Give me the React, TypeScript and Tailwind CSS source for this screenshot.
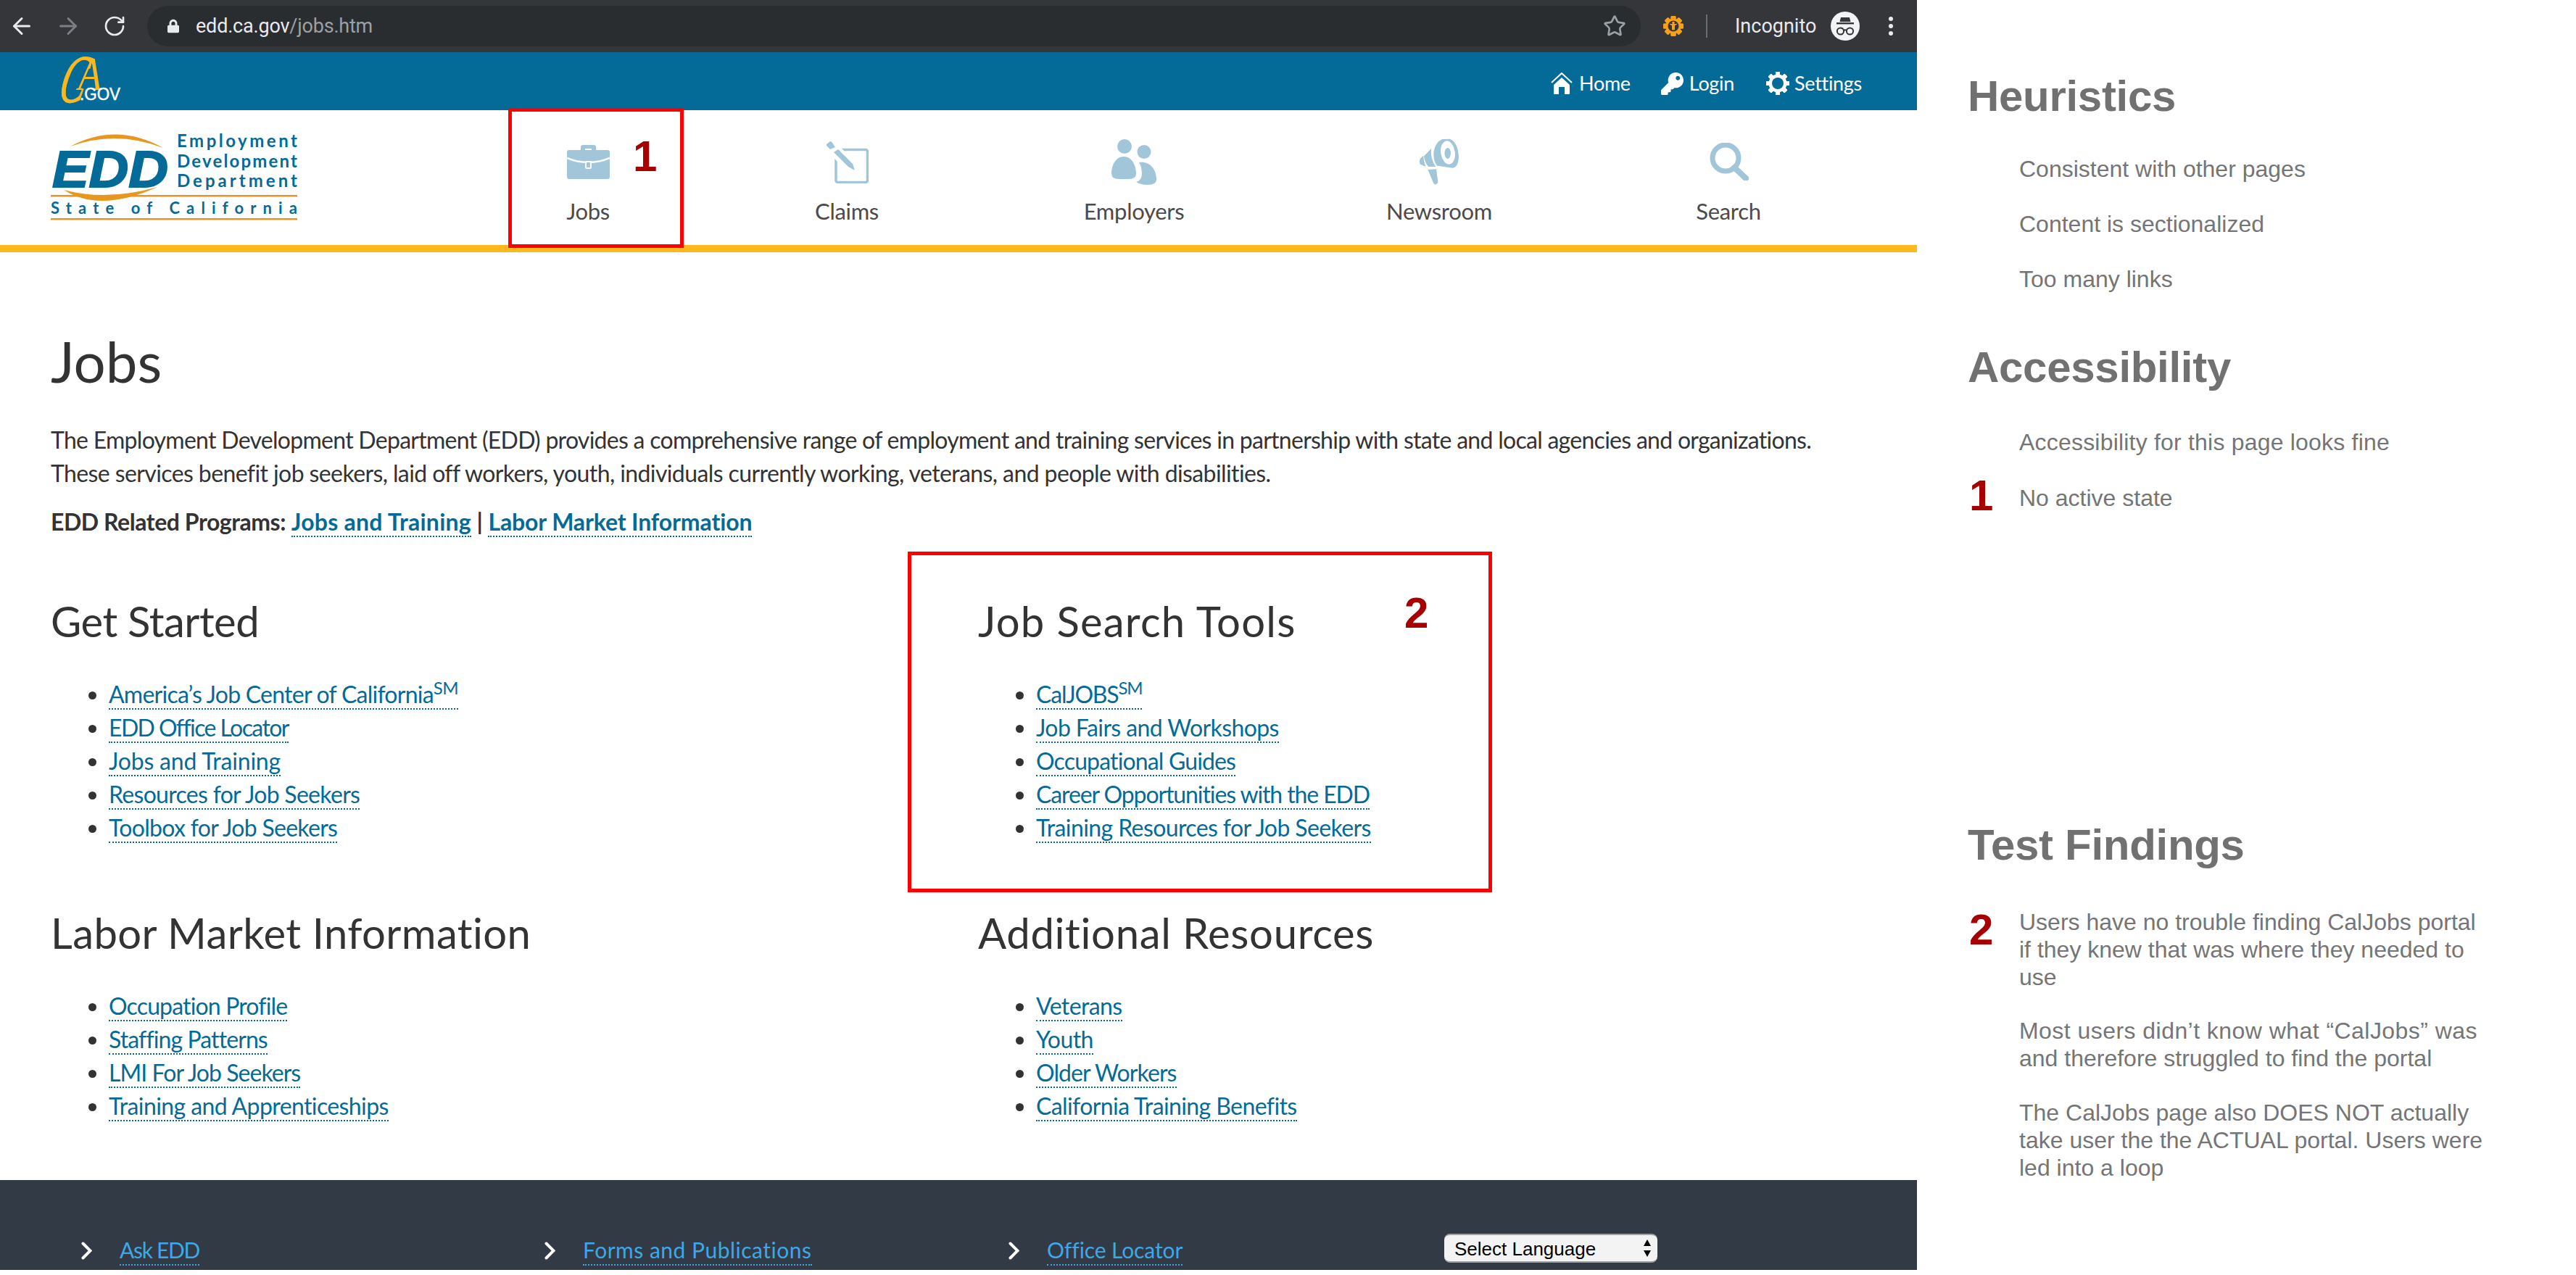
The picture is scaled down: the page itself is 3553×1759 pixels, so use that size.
import { ArrowLeft, ArrowRight, RotateCw, Star } from 'lucide-react'
import { FaKey, FaLock } from 'react-icons/fa'

const blue = '#a1c6d9'

function Briefcase() {
  return (
    <svg width="59" height="48" viewBox="0 0 59 48">
      <path d="M19 9V4a3 3 0 0 1 3-3h15a3 3 0 0 1 3 3v5h-6V6H25v3z" fill={blue} />
      <path d="M3 8h53a3 3 0 0 1 3 3v34a3 3 0 0 1-3 3H3a3 3 0 0 1-3-3V11a3 3 0 0 1 3-3z" fill={blue} />
      <path d="M0 19c18 8 41 8 59 0" fill="none" stroke="#fff" strokeWidth="2.5" />
      <rect x="26" y="24" width="7" height="9" rx="1.5" fill={blue} stroke="#fff" strokeWidth="2" />
    </svg>
  )
}

function ClaimsIcon() {
  return (
    <svg width="59" height="59" viewBox="0 0 59 59">
      <rect x="14" y="12.5" width="43.5" height="45" rx="2.5" fill="none" stroke={blue} strokeWidth="3.5" />
      <path d="M2 2l38 40" stroke="#fff" strokeWidth="17" />
      <path d="M1 5l5-4q2 0 3 2l4 6-7 3-5-5z" fill={blue} />
      <path d="M11 16l6-4 20 20 3 9-9-5z" fill={blue} />
    </svg>
  )
}

function EmployersIcon() {
  return (
    <svg width="62" height="63" viewBox="0 0 62 63">
      <ellipse cx="18" cy="10" rx="10" ry="10" fill={blue} />
      <circle cx="45" cy="17.5" r="9.5" fill={blue} />
      <path d="M38 32c14-2 24 8 24 24q0 7-12 7-10 0-16-4 8-2 8-12 0-8-4-15z" fill={blue} />
      <path d="M17 24c11 0 17 12 17 24q0 7-10 7H10Q0 55 0 47c0-11 6-23 17-23z" fill={blue} />
    </svg>
  )
}

function MegaphoneIcon() {
  return (
    <svg width="56" height="65" viewBox="170 70 170 200">
      <path d="M268 73Q240 85 232 125q-4 35 13 60l65 10q25 0 28-45-3-65-38-78z" fill={blue} />
      <ellipse cx="292" cy="130" rx="30" ry="50" transform="rotate(-8 292 130)" fill="#fff" />
      <ellipse cx="291" cy="133" rx="13" ry="23" fill={blue} />
      <path d="M222 112l-32 33q5 30 20 45l30 0q-25-40-18-78z" fill={blue} />
      <path d="M188 143l-13 12q-7 15 0 25l23 10q-10-25-10-47z" fill={blue} />
      <path d="M207 202l36-2 7 58q-10 12-18 4z" fill={blue} />
    </svg>
  )
}

function SearchIcon() {
  return (
    <svg width="55" height="52" viewBox="0 0 55 52">
      <circle cx="23" cy="21" r="18" fill="none" stroke={blue} strokeWidth="7" />
      <path d="M35 34l16 15" stroke={blue} strokeWidth="8" strokeLinecap="round" />
    </svg>
  )
}

function HomeIcon() {
  return (
    <svg width="30" height="30" viewBox="0 0 30 30">
      <path d="M1 14L15 1l14 13" fill="none" stroke="#fff" strokeWidth="2" />
      <path d="M15 7l11 10v12q0 1-1 1h-6V20h-8v10H5q-1 0-1-1V17z" fill="#fff" />
    </svg>
  )
}

const teeth = [0, 45, 90, 135, 180, 225, 270, 315]

function SettingsGear() {
  return (
    <svg width="32" height="32" viewBox="0 0 32 32" className="ml-[44px]">
      {teeth.map((a) => (
        <rect key={a} x="13" y="0" width="6" height="32" rx="1" fill="#fff" transform={`rotate(${a} 16 16)`} />
      ))}
      <circle cx="16" cy="16" r="12.5" fill="#fff" />
      <circle cx="16" cy="16" r="8" fill="#046b99" />
    </svg>
  )
}

function AccessGear() {
  return (
    <svg width="28" height="28" viewBox="0 0 28 28">
      {teeth.map((a) => (
        <rect key={a} x="10.5" y="0" width="7" height="28" rx="1.5" fill="#f9a01b" transform={`rotate(${a} 14 14)`} />
      ))}
      <circle cx="14" cy="14" r="10.5" fill="#f9a01b" />
      <circle cx="14" cy="14" r="7.5" fill="#35363a" />
      <circle cx="14" cy="9.5" r="1.8" fill="#f9a01b" />
      <path d="M9 11l3.5 2v6h1.2l.3-3 .3 3h1.2v-6l3.5-2" fill="#f9a01b" stroke="#f9a01b" strokeWidth="1" />
    </svg>
  )
}

function IncognitoAvatar() {
  return (
    <svg width="40" height="40" viewBox="0 0 40 40">
      <circle cx="20" cy="20" r="20" fill="#f1f3f4" />
      <path d="M14 8h12l1.5 6h-15z" fill="#35363a" />
      <rect x="8" y="15" width="24" height="2.4" fill="#35363a" />
      <circle cx="13.5" cy="27" r="4.6" fill="none" stroke="#35363a" strokeWidth="2" />
      <circle cx="26.5" cy="27" r="4.6" fill="none" stroke="#35363a" strokeWidth="2" />
      <path d="M18 26q2-1.4 4 0" fill="none" stroke="#35363a" strokeWidth="2" />
    </svg>
  )
}

function CaGovLogo() {
  return (
    <svg width="90" height="68" viewBox="0 0 90 68" className="overflow-visible">
      <text transform="translate(0 63) scale(.6 1.05) skewX(-22)" fontFamily="'Liberation Serif', serif" fontStyle="italic" fontSize="90" fill="#fdb81e" stroke="#fdb81e" strokeWidth="1">C</text>
      <text transform="translate(30 46) scale(.8 1)" fontFamily="'Liberation Serif', serif" fontStyle="italic" fontSize="66" fill="#fdb81e">A</text>
      <text x="32" y="60" fontFamily="'Liberation Sans', sans-serif" fontSize="24" fill="#fff" stroke="#fff" strokeWidth=".5" textLength="56" lengthAdjust="spacingAndGlyphs">.GOV</text>
    </svg>
  )
}

function EddLogo() {
  const orange = '#e8961e'
  const navy = '#046b99'
  const side = { fontFamily: 'Lato, sans-serif', fontWeight: 700, fontSize: 24, fill: navy }
  return (
    <svg width="340" height="130" viewBox="0 -8 340 130">
      <path d="M27 17Q90-17 155 19 90-6 27 17z" fill={orange} />
      <path d="M18 77q50 32 129-4-70 20-129 4z" fill={orange} />
      <text x="2" y="73" fontFamily="'Liberation Sans', sans-serif" fontWeight="700" fontStyle="italic" fontSize="71" fill={navy} stroke={navy} strokeWidth="2" textLength="160" lengthAdjust="spacingAndGlyphs">EDD</text>
      <text x="174" y="18" {...side} textLength="166">Employment</text>
      <text x="174" y="46" {...side} textLength="166">Development</text>
      <text x="174" y="73" {...side} textLength="166">Department</text>
      <rect x="0" y="84" width="340" height="2.5" fill={orange} />
      <text x="0" y="110" {...side} fontSize="22" textLength="340">State of California</text>
      <rect x="0" y="116" width="340" height="2.5" fill={orange} />
    </svg>
  )
}

const navItems = [
  { label: 'Jobs', width: 'w-[340px]', icon: <Briefcase /> },
  { label: 'Claims', width: 'w-[374px]', icon: <ClaimsIcon /> },
  { label: 'Employers', width: 'w-[418px]', icon: <EmployersIcon /> },
  { label: 'Newsroom', width: 'w-[424px]', icon: <MegaphoneIcon /> },
  { label: 'Search', width: 'w-[374px]', icon: <SearchIcon /> },
]

type PageLink = { text: string; sm?: boolean; track?: string }

function LinkList({ links }: { links: PageLink[] }) {
  return (
    <ul className="list-disc pl-[80px] text-[32px] leading-[46px] tracking-[-0.6px] text-[#333]">
      {links.map((l) => (
        <li key={l.text}>
          <a href="#" className={`border-b-2 border-dotted border-[#046b99] text-[#046b99] ${l.track ?? ''}`}>
            {l.text}
            {l.sm && <sup className="text-[24px] leading-none">SM</sup>}
          </a>
        </li>
      ))}
    </ul>
  )
}

function Section({ title, track, links }: { title: string; track: string; links: PageLink[] }) {
  return (
    <section>
      <h2 className={`mb-[43px] text-[58px] leading-[70px] text-[#333] ${track}`}>{title}</h2>
      <LinkList links={links} />
    </section>
  )
}

function FooterLink({ text, width, track }: { text: string; width: string; track: string }) {
  return (
    <div className={`${width} flex items-center`}>
      <svg width="15" height="25" viewBox="0 0 15 25" className="mr-[38px]">
        <path d="M2.5 2.5l10 10-10 10" fill="none" stroke="#fff" strokeWidth="4" strokeLinecap="round" />
      </svg>
      <a href="#" className={`border-b-2 border-dotted border-[#3ea8e5] text-[30px] leading-[40px] text-[#3ea8e5] ${track}`}>
        {text}
      </a>
    </div>
  )
}

function Annotation({ children }: { children: string }) {
  return <span className="[font-family:'Liberation_Sans',sans-serif] text-[60px] leading-[60px] font-bold text-[#a80000]">{children}</span>
}

export default function App() {
  return (
    <div className="flex h-[1759px] w-[3553px] overflow-hidden bg-white [font-family:Lato,sans-serif]">
      <div className="relative flex h-full w-[2644px] flex-col">
        {/* browser chrome */}
        <div className="flex h-[72px] items-center bg-[#35363a] [font-family:Roboto,sans-serif]">
          <ArrowLeft className="ml-[12px] h-[36px] w-[36px] text-[#e8eaed]" strokeWidth={2} />
          <ArrowRight className="ml-[28px] h-[36px] w-[36px] text-[#7c7f84]" strokeWidth={2} />
          <RotateCw className="ml-[30px] h-[32px] w-[32px] text-[#e8eaed]" strokeWidth={2} />
          <div className="ml-[29px] flex h-[56px] w-[2060px] items-center rounded-full bg-[#2a2d30] pr-[20px]">
            <FaLock className="ml-[28px] h-[20px] w-[16px] text-[#e8eaed]" />
            <span className="ml-[23px] flex-1 text-[27px] tracking-[-0.2px] text-[#e8eaed]">
              edd.ca.gov<span className="text-[#9aa0a6]">/jobs.htm</span>
            </span>
            <Star className="h-[32px] w-[32px] text-[#9aa0a6]" strokeWidth={2} />
          </div>
          <div className="ml-[31px]"><AccessGear /></div>
          <div className="ml-[31px] h-[32px] w-[2px] bg-[#6b6e72]" />
          <span className="ml-[38px] text-[27px] text-[#e8eaed]">Incognito</span>
          <div className="ml-[20px]"><IncognitoAvatar /></div>
          <div className="ml-[40px] flex flex-col gap-[4px]">
            <span className="h-[6px] w-[6px] rounded-full bg-[#e8eaed]" />
            <span className="h-[6px] w-[6px] rounded-full bg-[#e8eaed]" />
            <span className="h-[6px] w-[6px] rounded-full bg-[#e8eaed]" />
          </div>
        </div>

        {/* top blue bar */}
        <div className="flex h-[80px] items-center justify-between bg-[#046b99] pr-[76px] pl-[78px]">
          <CaGovLogo />
          <div className="flex translate-y-[3px] items-center text-[27px] tracking-[-0.3px] text-white">
            <HomeIcon />
            <span className="ml-[9px]">Home</span>
            <FaKey className="ml-[42px] h-[31px] w-[31px]" />
            <span className="ml-[8px]">Login</span>
            <SettingsGear />
            <span className="ml-[7px]">Settings</span>
          </div>
        </div>

        {/* nav */}
        <div className="flex h-[186px]">
          <div className="w-[641px] pt-[25px] pl-[70px]">
            <EddLogo />
          </div>
          {navItems.map((item) => (
            <a key={item.label} href="#" className={`${item.width} flex flex-col items-center pt-[38px] text-[#4d4a4b]`}>
              <div className="flex h-[66px] items-center">{item.icon}</div>
              <span className="mt-[15px] text-[31px] leading-[40px] tracking-[-0.3px]">{item.label}</span>
            </a>
          ))}
        </div>
        <div className="h-[10px] bg-[#fdb81e]" />

        {/* page body */}
        <main className="flex-1 px-[70px] pt-[110px] text-[#333]">
          <h1 className="mb-[46px] text-[78px] leading-[80px]">Jobs</h1>
          <p className="text-[32px] leading-[46px] tracking-[-0.6px]">
            <span className="tracking-[-0.72px]">The Employment Development Department (EDD) provides a comprehensive range of employment and training services in partnership with state and local agencies and organizations.</span>
            <br />
            These services benefit job seekers, laid off workers, youth, individuals currently working, veterans, and people with disabilities.
          </p>
          <p className="mt-[21px] text-[32px] leading-[46px] font-bold tracking-[-0.13px]">
            <span className="tracking-[-0.45px]">EDD Related Programs:</span>{' '}
            <a href="#" className="border-b-2 border-dotted border-[#046b99] tracking-[0.25px] text-[#046b99]">Jobs and Training</a>
            {' | '}
            <a href="#" className="border-b-2 border-dotted border-[#046b99] text-[#046b99]">Labor Market Information</a>
          </p>
          <div className="mt-[79px] grid grid-cols-[1279px_1fr] gap-y-[87px]">
            <Section
              title="Get Started"
              track="tracking-[-0.5px]"
              links={[
                { text: 'America’s Job Center of California', sm: true, track: 'tracking-[-0.75px]' },
                { text: 'EDD Office Locator', track: 'tracking-[-1.6px]' },
                { text: 'Jobs and Training', track: 'tracking-[-0.2px]' },
                { text: 'Resources for Job Seekers', track: 'tracking-[-0.7px]' },
                { text: 'Toolbox for Job Seekers', track: 'tracking-[-0.7px]' },
              ]}
            />
            <Section
              title="Job Search Tools"
              track="tracking-[1.2px]"
              links={[
                { text: 'CalJOBS', sm: true, track: 'tracking-[-1.2px]' },
                { text: 'Job Fairs and Workshops' },
                { text: 'Occupational Guides', track: 'tracking-[-0.85px]' },
                { text: 'Career Opportunities with the EDD', track: 'tracking-[-1.1px]' },
                { text: 'Training Resources for Job Seekers' },
              ]}
            />
            <Section
              title="Labor Market Information"
              track="tracking-[0.4px]"
              links={[
                { text: 'Occupation Profile', track: 'tracking-[-0.85px]' },
                { text: 'Staffing Patterns', track: 'tracking-[-0.9px]' },
                { text: 'LMI For Job Seekers', track: 'tracking-[-0.95px]' },
                { text: 'Training and Apprenticeships' },
              ]}
            />
            <Section
              title="Additional Resources"
              track="tracking-[0.65px]"
              links={[
                { text: 'Veterans' },
                { text: 'Youth' },
                { text: 'Older Workers', track: 'tracking-[-0.9px]' },
                { text: 'California Training Benefits' },
              ]}
            />
          </div>
        </main>

        {/* footer */}
        <footer className="mb-[7px] flex h-[124px] items-start bg-[#323a45] pt-[74px] pl-[112px]">
          <div className="flex h-[46px] items-center">
            <FooterLink text="Ask EDD" width="w-[639px]" track="tracking-[-1.3px]" />
            <FooterLink text="Forms and Publications" width="w-[640px]" track="tracking-[0.5px]" />
            <FooterLink text="Office Locator" width="w-[601px]" track="tracking-[-0.1px]" />
          </div>
          <div className="relative">
            <select className="h-[40px] w-[294px] appearance-none rounded-[8px] border-t-2 border-b-2 border-[#a0a0a0] bg-[#f3f3f3] pl-[14px] [font-family:'Liberation_Sans',sans-serif] text-[26px] text-black">
              <option>Select Language</option>
            </select>
            <svg width="12" height="26" viewBox="0 0 12 26" className="pointer-events-none absolute top-[7px] right-[8px]">
              <path d="M6 1l5 9H1zM6 25l5-9H1z" fill="#000" />
            </svg>
          </div>
        </footer>

        {/* red annotations over the page */}
        <div className="absolute top-[149px] left-[701px] h-[193px] w-[242px] border-[5px] border-[#ff0000]" />
        <div className="absolute top-[186px] left-[873px]"><Annotation>1</Annotation></div>
        <div className="absolute top-[761px] left-[1252px] h-[470px] w-[806px] border-[5px] border-[#ff0000]" />
        <div className="absolute top-[816px] left-[1937px]"><Annotation>2</Annotation></div>
      </div>

      {/* findings panel */}
      <aside className="flex-1 pt-[98px] pl-[72px] [font-family:'Liberation_Sans',sans-serif] text-[32px] text-[#757575]">
        <h2 className="-ml-[2px] text-[60px] leading-[70px] font-bold tracking-[-0.3px] text-[#717171]">Heuristics</h2>
        <div className="mt-[27px] pl-[69px] leading-[76px]">
          <p>Consistent with other pages</p>
          <p>Content is sectionalized</p>
          <p>Too many links</p>
        </div>

        <h2 className="mt-[49px] -ml-[2px] text-[60px] leading-[70px] font-bold tracking-[-0.3px] text-[#717171]">Accessibility</h2>
        <div className="mt-[30px] leading-[76px]">
          <p className="pl-[69px] tracking-[0.2px]">Accessibility for this page looks fine</p>
          <div className="flex items-center">
            <div className="w-[69px] translate-y-[6px]"><Annotation>1</Annotation></div>
            <p>No active state</p>
          </div>
        </div>

        <h2 className="mt-[406px] -ml-[2px] text-[60px] leading-[70px] font-bold tracking-[-0.3px] text-[#717171]">Test Findings</h2>
        <div className="mt-[52px] flex items-start">
          <div className="w-[69px]"><Annotation>2</Annotation></div>
          <div className="leading-[38px]">
            <p>
              Users have no trouble finding CalJobs portal
              <br />
              if they knew that was where they needed to
              <br />
              use
            </p>
            <p className="mt-[36px]">
              <span className="tracking-[0.45px]">Most users didn’t know what “CalJobs” was</span>
              <br />
              and therefore struggled to find the portal
            </p>
            <p className="mt-[37px]">
              The CalJobs page also DOES NOT actually
              <br />
              take user the the ACTUAL portal. Users were
              <br />
              led into a loop
            </p>
          </div>
        </div>
      </aside>
    </div>
  )
}
